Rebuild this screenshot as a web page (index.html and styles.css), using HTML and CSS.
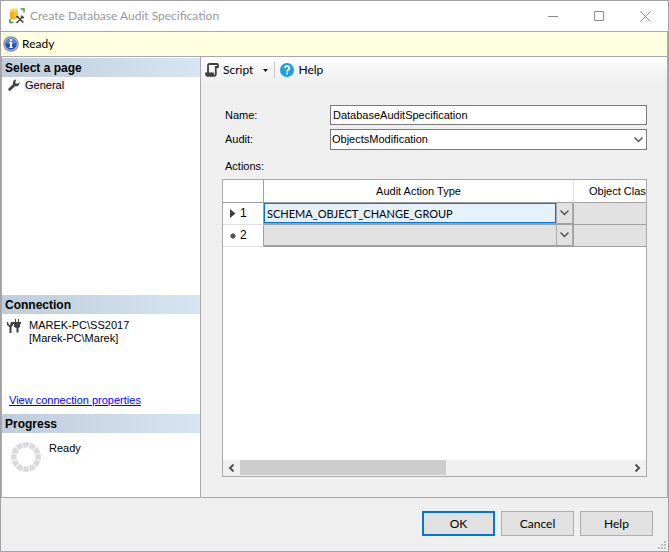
FILE: index.html
```html
<!DOCTYPE html>
<html lang="en">
<head>
<meta charset="utf-8">
<title>Create Database Audit Specification</title>
<link rel="stylesheet" href="styles.css">
</head>
<body>
<div class="window">
  <header class="titlebar">
    <svg class="app-icon" width="16" height="16" viewBox="0 0 16 16">
      <path d="M1 2v8c0 2 8 2 8 0V2z" fill="#f0b02a"/>
      <path d="M5.500 3H9v7c0 1-1.500 1.400-3.500 1.400z" fill="#f7c640"/>
      <ellipse cx="5" cy="2" rx="4" ry="1.700" fill="#ffd968"/>
      <path d="M11.500 1H15v3.500M1 11v3.500h3.500" fill="none" stroke="#3f9b4a" stroke-width="1.500"/>
      <path d="M7 15l7-7M8.500 9l6 6" fill="none" stroke="#fff" stroke-width="3"/>
      <path d="M7.500 15l6.500-6.500M8.500 9l6 5.500M7 8.500l2 .3V10M12.500 7.500V9.500H15" fill="none" stroke="#404040" stroke-width="1.500"/>
    </svg>
    <h1 class="title">Create Database Audit Specification</h1>
    <div class="window-controls">
      <button class="window-button" aria-label="Minimize"><svg width="11" height="11" viewBox="0 0 11 11"><path d="M0 5.500h10"/></svg></button>
      <button class="window-button" aria-label="Maximize"><svg width="11" height="11" viewBox="0 0 11 11"><path d="M.5 .5h9v9h-9z"/></svg></button>
      <button class="window-button" aria-label="Close"><svg width="11" height="11" viewBox="0 0 11 11"><path d="M.5 .5l10 10M10.500 .5l-10 10"/></svg></button>
    </div>
  </header>

  <div class="status">
    <svg width="16" height="16" viewBox="0 0 16 16">
      <circle cx="8" cy="8" r="7.800" fill="#7f8899"/>
      <circle cx="8" cy="8" r="6.800" fill="#b9c3d6"/>
      <circle cx="8" cy="8" r="5.800" fill="#2453b8"/>
      <path d="M3 7a5 5 0 0 1 10 0c-3 1.500-7 1.500-10 0z" fill="#5c87d8"/>
      <path d="M7 3h2v2H7zM6 6h3v5h1v1H6v-1h1V7H6z" fill="#fff"/>
    </svg>
    <span>Ready</span>
  </div>

  <div class="content">
    <aside class="sidebar">
      <section class="pages">
        <h2 class="side-heading">Select a page</h2>
        <a class="page-link" href="#general">
          <svg width="12" height="12" viewBox="0 0 12 12"><path d="M.6 9.600L5 5.300C4.300 3 5.600.7 8.500.6L7.300 2.500l.3 1.900 1.900.3L11.500 3.200c.3 3-2 4.700-4.500 4L2.500 11.500C1.200 12.300-.3 11 .6 9.600z" fill="#404040"/></svg>
          <span class="page-name">General</span>
        </a>
      </section>
      <section class="connection">
        <h2 class="side-heading">Connection</h2>
        <div class="server">
          <svg width="14" height="14" viewBox="0 0 14 14" fill="#404040">
            <path d="M0 3h1l1 3h1l1-3h2v3L4.500 8v6h-2V8L0 6z"/>
            <path d="M8 0h1v3h2V0h1v3h2v2h-1v3l-1.500 1v4.500h-2V9L7 8V5H6V3h2z"/>
          </svg>
          <p class="server-name">MAREK-PC\SS2017<br>[Marek-PC\Marek]</p>
        </div>
        <a class="properties-link" href="#properties">View connection properties</a>
      </section>
      <section class="progress">
        <h2 class="side-heading">Progress</h2>
        <div class="progress-state">
          <svg width="30" height="30" viewBox="0 0 30 30"><circle cx="15" cy="15" r="12.200" fill="none" stroke="#dadada" stroke-width="5.500" pathLength="120" stroke-dasharray="8.800 1.200" stroke-dashoffset="4.400"/></svg>
          <span>Ready</span>
        </div>
      </section>
    </aside>

    <main class="page">
      <div class="toolbar">
        <button class="tool script">
          <svg width="14" height="14" viewBox="0 0 14 14"><path d="M3 9.500V2.500Q3 1 4.500 1H12Q13.200 1 13 4H10.800V11Q10.800 12.800 9 12.800H2.500Q1 12.800 1 10.500H8V12" fill="none" stroke="#404040" stroke-width="1.800"/><path d="M1 10.500h7v2.300H2z" fill="#404040"/></svg>
          <span>Script</span>
          <svg class="tool-arrow" width="5" height="3" viewBox="0 0 5 3"><path d="M0 0h5L2.500 3z" fill="#111"/></svg>
        </button>
        <button class="tool help">
          <svg width="14" height="14" viewBox="0 0 14 14"><circle cx="7" cy="7" r="7" fill="#1ba1e2"/><path d="M4.800 5.200C4.800 2.300 9.400 2.300 9.400 5.200 9.400 6.700 7.100 6.800 7.100 8.600M7.100 9.600v1.900" fill="none" stroke="#fff" stroke-width="1.700"/></svg>
          <span>Help</span>
        </button>
      </div>

      <form class="form">
        <label for="name">Name:</label>
        <input class="field" id="name" type="text" value="DatabaseAuditSpecification">
        <label for="audit">Audit:</label>
        <div class="select-wrap">
          <select class="field audit" id="audit"><option>ObjectsModification</option></select>
          <svg class="select-arrow" width="9" height="6" viewBox="0 0 9 6"><path d="M.5 .5l4 4 4-4"/></svg>
        </div>
      </form>

      <p class="actions-label" id="actions">Actions:</p>
      <div class="grid">
        <div class="grid-view">
          <table class="actions" aria-labelledby="actions">
            <colgroup><col class="col-row"><col class="col-type"><col class="col-class"></colgroup>
            <thead>
              <tr><td class="corner"></td><th>Audit Action Type</th><th class="class-heading">Object Class</th></tr>
            </thead>
            <tbody>
              <tr>
                <th class="row-head"><svg width="6" height="9" viewBox="0 0 6 9"><path d="M0 0l5.500 4.500L0 9z" fill="#404040"/></svg><span>1</span></th>
                <td class="cell"><div class="picker selected"><span class="picker-value">SCHEMA_OBJECT_CHANGE_GROUP</span><button class="picker-button" aria-label="Choose action type 1"><svg width="9" height="6" viewBox="0 0 9 6"><path d="M.5 .5l4 4 4-4"/></svg></button></div></td>
                <td class="cell"></td>
              </tr>
              <tr>
                <th class="row-head"><svg width="6" height="6" viewBox="0 0 6 6"><circle cx="3" cy="3" r="2.400" fill="#555"/><path d="M3 0v6M0 3h6M1 1l4 4M5 1L1 5" stroke="#555" stroke-width=".8"/></svg><span>2</span></th>
                <td class="cell"><div class="picker"><span class="picker-value"></span><button class="picker-button" aria-label="Choose action type 2"><svg width="9" height="6" viewBox="0 0 9 6"><path d="M.5 .5l4 4 4-4"/></svg></button></div></td>
                <td class="cell"></td>
              </tr>
            </tbody>
          </table>
        </div>
        <div class="scrollbar">
          <button class="scroll-button" aria-label="Scroll left"><svg width="7" height="8" viewBox="0 0 7 8"><path d="M5.500 .5L2 4l3.500 3.500"/></svg></button>
          <div class="track"><div class="thumb"></div></div>
          <button class="scroll-button" aria-label="Scroll right"><svg width="7" height="8" viewBox="0 0 7 8"><path d="M1.500 .5L5 4 1.500 7.500"/></svg></button>
        </div>
      </div>
    </main>
  </div>

  <footer class="footer">
    <button class="button default">OK</button>
    <button class="button">Cancel</button>
    <button class="button">Help</button>
    <svg class="grip" width="9" height="9" viewBox="0 0 9 9" fill="#bfbfbf"><path d="M6 0h2v2H6zM3 3h2v2H3zM6 3h2v2H6zM0 6h2v2H0zM3 6h2v2H3zM6 6h2v2H6z"/></svg>
  </footer>
</div>
</body>
</html>
```
FILE: styles.css
```css
* { box-sizing: border-box; }

body {
  margin: 0;
  color: #000;
  font: 11px/13px "Liberation Sans", Arial, sans-serif;
}

button, input, select { font: inherit; color: inherit; }
button { margin: 0; padding: 0; border: 0; background: none; }
h1, h2, p { margin: 0; }
svg { display: block; flex: none; }

.window {
  display: flex;
  flex-direction: column;
  min-height: 100vh;
  border: 1px solid #a3a3a6;
  background: #efefef;
}

/* Title bar */
.titlebar {
  display: flex;
  align-items: center;
  height: 31px;
  padding-left: 8px;
  border-bottom: 1px solid #a9a9ad;
  background: #fff;
}
.title {
  flex: 1;
  margin-left: 5px;
  color: #999;
  font: 12px/16px Lato, "Segoe UI", sans-serif;
}
.window-controls { display: flex; }
.window-button {
  display: grid;
  place-items: center;
  width: 46px;
  height: 28px;
}
.window-button path { fill: none; stroke: #8c8c8c; }

/* Status strip */
.status {
  display: flex;
  align-items: center;
  gap: 3px;
  height: 25px;
  padding-left: 2px;
  border-right: 1px solid #a9a9ad;
  border-bottom: 1px solid #a9a9ad;
  background: #ffffe1;
  font: 12px/16px Lato, "Segoe UI", sans-serif;
}

.content {
  display: flex;
  flex: 1;
  border: solid #a9a9ad;
  border-width: 0 1px 1px;
}

/* Sidebar */
.sidebar {
  display: flex;
  flex-direction: column;
  flex: none;
  width: 199px;
  padding-top: 1px;
  border-right: 1px solid #a9a9ad;
  background: #fff;
}
.side-heading {
  height: 19px;
  padding-left: 3px;
  background: linear-gradient(90deg, #bfcddb, #d7e4f2);
  font: bold 12px/20px "Liberation Sans", Arial, sans-serif;
}
.pages { flex: 1; }
.page-link {
  display: flex;
  align-items: center;
  gap: 4px;
  padding: 1px 0 0 6px;
  color: inherit;
  text-decoration: none;
}
.page-name {
  padding: 0 1px;
  background: #efefef;
  line-height: 14px;
}
.connection { height: 119px; }
.server {
  display: flex;
  gap: 8px;
  height: 80px;
  padding: 5px 0 0 5px;
}
.properties-link {
  margin-left: 7px;
  color: #00f;
}
.progress { height: 83px; }
.progress-state {
  display: flex;
  gap: 8px;
  padding: 9px 0 0 9px;
}

/* Page */
.page {
  display: flex;
  flex-direction: column;
  flex: 1;
  min-width: 0;
  padding-bottom: 20px;
}
.toolbar {
  display: flex;
  align-items: center;
  height: 26px;
  padding-left: 4px;
  background: linear-gradient(#fdfdfd, #efefef);
  font: 12px/16px Lato, "Segoe UI", sans-serif;
}
.tool { display: flex; align-items: center; gap: 4px; }
.tool-arrow { margin-left: 6px; }
.help { margin-left: 6px; padding-left: 5px; border-left: 1px solid #c4c4c4; }

.form {
  display: grid;
  grid-template-columns: 105px 1fr;
  align-items: center;
  row-gap: 4px;
  padding: 22px 20px 0 24px;
}
.field {
  display: block;
  width: 100%;
  height: 20px;
  margin: 0;
  padding: 0 2px;
  border: 1px solid #7a7a7a;
  border-radius: 0;
  outline: 0;
  background: #fff;
}
.select-wrap { position: relative; }
.audit { height: 21px; padding: 0 1px; appearance: none; }
.select-arrow { position: absolute; top: 8px; right: 4px; pointer-events: none; }
.select-arrow path, .picker-button path { fill: none; stroke: #505050; stroke-width: 1.4; }
.actions-label { padding: 10px 0 6px 24px; }

/* Actions grid */
.grid {
  display: flex;
  flex-direction: column;
  flex: 1;
  margin: 0 20px 0 21px;
  border: 1px solid #a9a9ad;
  background: #fff;
}
.grid-view { flex: 1; overflow: hidden; }
.actions {
  width: 500px;
  table-layout: fixed;
  border-spacing: 0;
}
.col-row { width: 41px; }
.col-type { width: 310px; }
.actions th, .actions td { padding: 0; font-weight: normal; }
.actions thead th, .corner {
  height: 23px;
  border-right: 1px solid #e0e0e0;
  border-bottom: 1px solid #a0a0a0;
}
.corner, .actions .row-head { border-right: 1px solid #a0a0a0; }
.actions thead .class-heading { padding-left: 15px; text-align: left; white-space: nowrap; }
.actions .row-head {
  height: 22px;
  padding-left: 7px;
  border-bottom: 1px solid #e0e0e0;
  font-size: 12px;
  text-align: left;
}
.row-head svg, .row-head span { display: inline-block; vertical-align: middle; }
.row-head svg { margin-right: 4px; }
.cell {
  height: 22px;
  border: solid #a0a0a0;
  border-width: 0 1px 1px 0;
  background: #e1e1e1;
}
.picker { display: flex; height: 21px; border-bottom: 1px solid #a0a0a0; }
.picker-value {
  flex: 1;
  padding-left: 2px;
  font: 11px/19px Lato, "Segoe UI", sans-serif;
}
.selected .picker-value { border: 1px solid #0078d7; background: #e5f1fb; }
.picker-button {
  display: grid;
  place-items: center;
  width: 17px;
  border: solid #a9a9ad;
  border-width: 0 1px;
}

.scrollbar { display: flex; height: 16px; background: #f0f0f0; }
.scroll-button { display: grid; place-items: center; width: 17px; }
.scroll-button path { fill: none; stroke: #505050; stroke-width: 2; }
.track { flex: 1; }
.thumb { width: 53%; height: 15px; background: #cdcdcd; }

/* Footer */
.footer {
  position: relative;
  display: flex;
  justify-content: flex-end;
  gap: 6px;
  padding: 13px 15px 15px;
}
.button {
  width: 73px;
  height: 25px;
  border: 1px solid #adadad;
  background: #e1e1e1;
  font: 12px/16px Lato, "Segoe UI", sans-serif;
}
.default { border: 2px solid #0078d7; }
.grip { position: absolute; right: 1px; bottom: 1px; }
```
